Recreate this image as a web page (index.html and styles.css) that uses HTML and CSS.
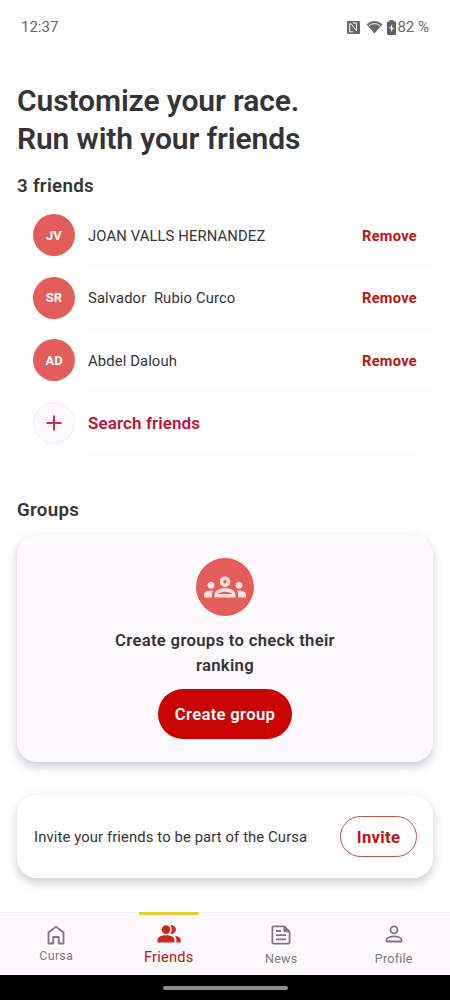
FILE: index.html
```
<!DOCTYPE html>
<html lang="en">
<head>
    <meta charset="UTF-8">
    <meta name="viewport" content="width=device-width, initial-scale=1">
    <title>Friends</title>
    <link rel="stylesheet" href="styles.css">
</head>
<body>
    <div class="screen">
        <div class="status-bar">
            <span class="time">12:37</span>
            <div class="status-icons">
                <svg class="nfc" width="13" height="13" viewBox="0 0 13 13">
                    <rect width="13" height="13" rx="1" fill="#686868"/>
                    <path d="M2.700 11V2.800h1.500l5.200 7V2M5.800 2h3.600M2.700 10.900h3.500" fill="none" stroke="#fff" stroke-width="1"/>
                </svg>
                <svg class="wifi" width="17" height="14" viewBox="0 0 17 14">
                    <path d="M.5 4.200Q8.500-2.300 16.500 4.200L8.500 13.500z" fill="#686868"/>
                    <path d="M2.800 5.700Q8.500 1.500 14.200 5.700" fill="none" stroke="#fff" stroke-width="1"/>
                </svg>
                <svg class="battery" width="9" height="15" viewBox="0 0 9 15">
                    <path d="M2.500 0h4v1.500H8a1 1 0 0 1 1 1V14a1 1 0 0 1-1 1H1a1 1 0 0 1-1-1V2.500a1 1 0 0 1 1-1h1.500z" fill="#606060"/>
                    <path d="M5.300 4L2.200 8.600h2L3.700 12.500 6.900 7.500h-2z" fill="#fff"/>
                </svg>
                <span>82 %</span>
            </div>
        </div>

        <main class="content">
            <h1>Customize your race.<br>Run with your friends</h1>

            <h2>3 friends</h2>
            <div class="friends">
                <div class="friend">
                    <div class="avatar">JV</div>
                    <div class="friend-info">
                        <span class="name">JOAN VALLS HERNANDEZ</span>
                        <a class="remove">Remove</a>
                    </div>
                </div>
                <div class="friend">
                    <div class="avatar">SR</div>
                    <div class="friend-info">
                        <span class="name">Salvador  Rubio Curco</span>
                        <a class="remove">Remove</a>
                    </div>
                </div>
                <div class="friend">
                    <div class="avatar">AD</div>
                    <div class="friend-info">
                        <span class="name">Abdel Dalouh</span>
                        <a class="remove">Remove</a>
                    </div>
                </div>
                <div class="friend search">
                    <div class="avatar add">
                        <svg width="16" height="16" viewBox="0 0 16 16">
                            <path d="M8 .5v15M.5 8h15" stroke="#cb2c4c" stroke-width="2"/>
                        </svg>
                    </div>
                    <div class="friend-info">
                        <span class="search-label">Search friends</span>
                    </div>
                </div>
            </div>

            <h2 class="groups-title">Groups</h2>
            <div class="card groups-card">
                <div class="groups-icon">
                    <svg width="42" height="42" viewBox="0 0 24 24" fill="#ffe1e0">
                        <path d="M4 13c1.100 0 2-.9 2-2s-.9-2-2-2-2 .9-2 2 .9 2 2 2zm1.130 1.100C4.760 14.040 4.390 14 4 14c-.99 0-1.930.21-2.780.58C.48 14.900 0 15.620 0 16.430V18h4.500v-1.610c0-.83.23-1.610.63-2.290zM20 13c1.100 0 2-.9 2-2s-.9-2-2-2-2 .9-2 2 .9 2 2 2zm4 3.430c0-.81-.48-1.530-1.220-1.850C21.930 14.210 20.990 14 20 14c-.39 0-.76.04-1.130.1.400.68.63 1.460.63 2.290V18H24v-1.570zM16.240 13.650C15.070 13.130 13.630 12.750 12 12.750s-3.070.39-4.240.9C6.680 14.130 6 15.210 6 16.390V18h12v-1.610c0-1.180-.68-2.260-1.760-2.740zM8.070 16c.09-.23.13-.39.91-.69.97-.38 1.990-.56 3.020-.56s2.050.18 3.020.56c.77.3.81.46.91.69H8.070zM12 8c.55 0 1 .45 1 1s-.45 1-1 1-1-.45-1-1 .45-1 1-1m0-2c-1.660 0-3 1.340-3 3s1.340 3 3 3 3-1.340 3-3-1.340-3-3-3z"/>
                    </svg>
                </div>
                <p class="groups-text">Create groups to check their ranking</p>
                <button class="create-btn">Create group</button>
            </div>

            <div class="card invite-card">
                <span>Invite your friends to be part of the Cursa</span>
                <button class="invite-btn">Invite</button>
            </div>
        </main>

        <nav class="tabs">
            <a class="tab home">
                <svg width="18" height="20" viewBox="0 0 18 20">
                    <path d="M1.500 7.500L9 1.800l7.500 5.700V18.500h-4.700V12H6.200v6.500H1.500z" fill="none" stroke="#7b797c" stroke-width="1.800" stroke-linejoin="round"/>
                </svg>
                <span>Cursa</span>
            </a>
            <a class="tab active">
                <svg width="24" height="18" viewBox="0 0 24 18" fill="#ce2522">
                    <circle cx="9" cy="4.600" r="4.300"/>
                    <path d="M.5 17.500v-2.700C.5 11.700 5.300 10.300 9 10.300s8.500 1.400 8.500 4.500v2.700z"/>
                    <path d="M13.400.5a4.300 4.300 0 1 1 0 8.200c1.800-2.200 1.800-6 0-8.200zM17.600 10.700c3.200.5 6.100 1.700 6.100 4.100v2.700h-4.300v-2.700c0-1.700-.7-3.100-1.800-4.100z"/>
                </svg>
                <span>Friends</span>
            </a>
            <a class="tab">
                <svg width="20" height="20" viewBox="0 0 20 20" fill="none" stroke="#7b797c" stroke-width="1.800">
                    <path d="M2.500 1.400h10.800l5.300 5.300v10.800q0 1.100-1.100 1.100h-15q-1.100 0-1.100-1.100v-15q0-1.100 1.100-1.100z"/>
                    <path d="M13 1.500v5.300h5.500z" fill="#7b797c" stroke-width="1"/>
                    <path d="M5 6h5M5 10.200h10M5 14.300h10"/>
                </svg>
                <span>News</span>
            </a>
            <a class="tab profile">
                <svg width="18" height="18" viewBox="0 0 18 18" fill="none" stroke="#7b797c" stroke-width="1.800">
                    <circle cx="9" cy="4.900" r="3.500"/>
                    <path d="M1.500 16.500v-1.700c0-2.200 4.300-3.500 7.500-3.500s7.500 1.300 7.500 3.500v1.700z" stroke-linejoin="round"/>
                </svg>
                <span>Profile</span>
            </a>
        </nav>
        <div class="system-bar"><div class="handle"></div></div>
    </div>
</body>
</html>
```
FILE: styles.css
```
* {
    box-sizing: border-box;
}
body {
    font-family: Roboto, sans-serif;
    margin: 0;
    background: #fff;
    color: #343336;
}
svg {
    display: block;
    flex-shrink: 0;
}
.screen {
    display: flex;
    flex-direction: column;
    width: 450px;
    height: 1000px;
    overflow: hidden;
}
.status-bar {
    display: flex;
    justify-content: space-between;
    align-items: center;
    height: 54px;
    padding: 0 21px;
    font-size: 15px;
    color: #686868;
}
.status-icons {
    display: flex;
    align-items: center;
}
.wifi {
    margin-left: 6px;
}
.battery {
    margin: 0 1px 0 4px;
}
.content {
    flex: 1;
    padding: 28px 17px 0;
}
h1 {
    margin: 0;
    font-size: 30px;
    line-height: 38px;
    font-weight: 600;
    letter-spacing: -0.1px;
}
h2 {
    margin: 16px 0 0;
    font-size: 18.700px;
    line-height: 24px;
    font-weight: 600;
    letter-spacing: 0.3px;
}
.friends {
    margin-top: 6px;
}
.friend {
    display: flex;
    align-items: center;
    height: 62.500px;
    padding-left: 16px;
}
.avatar {
    display: flex;
    align-items: center;
    justify-content: center;
    width: 42px;
    height: 42px;
    margin-right: 13px;
    border-radius: 50%;
    background: #e35d5b;
    color: #fff;
    font-size: 13px;
    font-weight: 700;
}
.avatar.add {
    background: #fbf9fc;
    border: 1px solid #f0eef2;
}
.friend-info {
    display: flex;
    flex: 1;
    justify-content: space-between;
    align-items: center;
    height: 100%;
    padding: 2px 16px 0 0;
    border-bottom: 1px solid #f6f5f7;
}
.search .friend-info {
    margin-right: 16px;
}
.name {
    font-size: 14.800px;
    letter-spacing: 0.12px;
    white-space: pre;
}
.remove {
    font-size: 14.600px;
    font-weight: 700;
    letter-spacing: 0.3px;
    color: #bd120f;
}
.search-label {
    font-size: 17px;
    font-weight: 600;
    letter-spacing: 0.1px;
    color: #be1238;
}
.groups-title {
    margin-top: 44px;
}
.card {
    border-radius: 20px;
    box-shadow: 0 5px 10px rgba(40, 30, 50, 0.18), 0 2px 16px rgba(40, 30, 50, 0.06);
}
.groups-card {
    display: flex;
    flex-direction: column;
    align-items: center;
    height: 227px;
    margin-top: 13px;
    padding-top: 23px;
    background: #fbf9fc;
}
.groups-icon {
    display: flex;
    align-items: center;
    justify-content: center;
    width: 58px;
    height: 58px;
    border-radius: 50%;
    background: #e35d5b;
}
.groups-text {
    width: 250px;
    margin: 13px 0 11px;
    font-size: 16.700px;
    line-height: 24.500px;
    font-weight: 600;
    letter-spacing: 0.3px;
    text-align: center;
}
button {
    font-family: inherit;
    font-size: 16.700px;
    padding: 0;
    cursor: pointer;
}
.create-btn {
    width: 134px;
    height: 50px;
    border: none;
    border-radius: 25px;
    background: #c80300;
    color: #fff;
    font-weight: 600;
    letter-spacing: 0.3px;
}
.invite-card {
    display: flex;
    justify-content: space-between;
    align-items: center;
    height: 83px;
    margin-top: 33px;
    padding: 0 16px 0 17px;
    background: #fff;
    font-size: 14.800px;
    letter-spacing: 0.12px;
}
.invite-btn {
    width: 77px;
    height: 41px;
    padding-top: 1px;
    border: 1px solid #c4504d;
    border-radius: 21px;
    background: transparent;
    color: #bd120f;
    font-weight: 700;
    letter-spacing: 0.3px;
}
.tabs {
    display: grid;
    grid-template-columns: repeat(4, 1fr);
    height: 62px;
    background: #fbf9fc;
    box-shadow: 0 -1px 1px #efedf0;
}
.tab {
    position: relative;
    display: flex;
    flex-direction: column;
    align-items: center;
    padding-top: 12px;
    font-size: 12.500px;
    line-height: 16px;
    letter-spacing: 0.25px;
    color: #7b797c;
}
.tab span {
    margin-top: 6px;
}
.tab.home span {
    margin-top: 3px;
}
.tab.active {
    color: #bd120f;
    font-size: 14.600px;
}
.tab.active::before {
    content: "";
    position: absolute;
    top: -1px;
    width: 60px;
    height: 3px;
    background: #e8cd32;
}
.tab.profile span {
    margin-top: 8px;
}
.system-bar {
    display: flex;
    align-items: center;
    justify-content: center;
    height: 25px;
    background: #000;
}
.handle {
    width: 125px;
    height: 4px;
    border-radius: 2px;
    background: #8e8c8e;
}
```
